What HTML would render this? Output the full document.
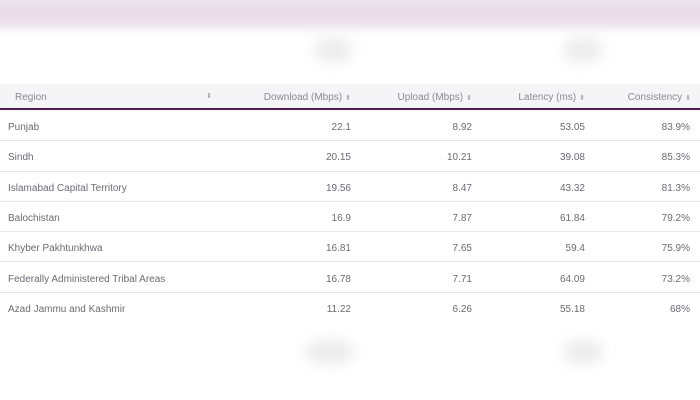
<!DOCTYPE html>
<html><head><meta charset="utf-8"><style>
*{margin:0;padding:0;box-sizing:border-box}
body{width:700px;height:400px;background:#fff;position:relative;overflow:hidden;font-family:"Liberation Sans",sans-serif;font-size:10px;color:#6b6b73}
.band{position:absolute;left:-20px;top:-10px;width:740px;height:40px;background:linear-gradient(#f2eff2,#e6d8e6 60%,#f3ecf3);filter:blur(4px)}
.blob{position:absolute;width:40px;height:24px;border-radius:50%;background:#ebebeb;filter:blur(7px)}
.hdr{position:absolute;left:0;top:84px;width:700px;height:26px;background:#f5f5f7;border-bottom:2px solid #4d1d4f}
.c{position:absolute;white-space:nowrap}
.h{top:92px;color:#8a8a94;font-size:10px}
.s{font-size:7px;color:#aaa;margin-left:3px}
.row{position:absolute;left:0;width:700px;border-bottom:1px solid #e6e6e8;height:30.3px}
.r{text-align:right}
</style></head><body>
<div class="band"></div>
<div class="blob" style="left:313px;top:38px"></div>
<div class="blob" style="left:563px;top:38px"></div>
<div class="blob" style="left:305px;top:340px;width:50px"></div>
<div class="blob" style="left:563px;top:340px"></div>
<div class="hdr"></div>
<div class="c h" style="left:15px">Region</div>
<div class="c h" style="left:206px;font-size:7px;color:#aaa">⬍</div>
<div class="c h r" style="right:349px">Download (Mbps)<span class="s">⬍</span></div>
<div class="c h r" style="right:228px">Upload (Mbps)<span class="s">⬍</span></div>
<div class="c h r" style="right:115px">Latency (ms)<span class="s">⬍</span></div>
<div class="c h r" style="right:9px">Consistency<span class="s">⬍</span></div>
<div id="rows"></div>
<script>
var d=[["Punjab","22.1","8.92","53.05","83.9%"],["Sindh","20.15","10.21","39.08","85.3%"],["Islamabad Capital Territory","19.56","8.47","43.32","81.3%"],["Balochistan","16.9","7.87","61.84","79.2%"],["Khyber Pakhtunkhwa","16.81","7.65","59.4","75.9%"],["Federally Administered Tribal Areas","16.78","7.71","64.09","73.2%"],["Azad Jammu and Kashmir","11.22","6.26","55.18","68%"]];
var h="";d.forEach(function(r,i){var y=111+i*30.3;var t=y+11;
h+='<div class="row" style="top:'+y+'px;'+(i==6?'border:none':'')+'"></div>';
h+='<div class="c" style="left:8px;top:'+t+'px">'+r[0]+'</div>';
var R=[349,228,115,10];for(var k=0;k<4;k++)h+='<div class="c r" style="right:'+R[k]+'px;top:'+t+'px">'+r[k+1]+'</div>';});
document.getElementById("rows").innerHTML=h;
</script>
</body></html>
